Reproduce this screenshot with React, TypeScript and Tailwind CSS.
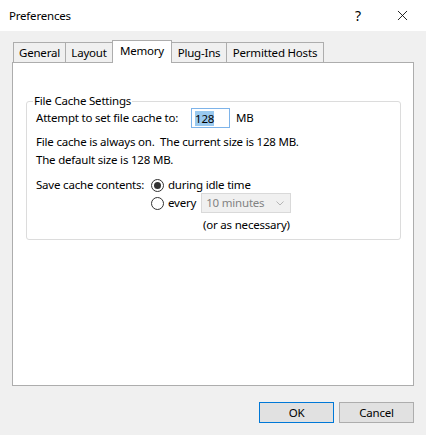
import { X } from 'lucide-react';

const font = { fontFamily: '"Noto Sans", "Open Sans", sans-serif' };

function Tab({ label, width, active = false }: { label: string; width: string; active?: boolean }) {
  if (active) {
    return (
      <div className={`relative z-10 -mb-px -ml-px flex h-[23px] justify-center border border-b-0 border-[#adadad] bg-white pt-[1px] ${width}`}>
        {label}
      </div>
    );
  }
  return (
    <div className={`-ml-px flex h-[20px] items-center justify-center border border-b-0 border-[#adadad] bg-[#f0f0f0] first:ml-0 ${width}`}>
      {label}
    </div>
  );
}

function Radio({ checked = false }: { checked?: boolean }) {
  return (
    <span className="flex h-[13px] w-[13px] items-center justify-center rounded-full border border-[#333] bg-white">
      {checked && <span className="h-[7px] w-[7px] rounded-full bg-[#333]" />}
    </span>
  );
}

export default function App() {
  return (
    <div
      className="flex h-[435px] w-[426px] flex-col bg-[#f0f0f0] text-[11.5px] tracking-[-0.2px] text-black"
      style={font}
    >
      <div className="flex h-[31px] items-center bg-white pl-[9px] pr-[15px]">
        <span className="flex-1">Preferences</span>
        <span className="mr-[33px] text-[14px]">?</span>
        <X size={17} strokeWidth={1.2} />
      </div>

      <div className="px-[12px] pt-[9px]">
        <div className="flex items-end pl-[1px]">
          <Tab label="General" width="w-[53px]" />
          <Tab label="Layout" width="w-[48px]" />
          <Tab label="Memory" width="w-[60px]" active />
          <Tab label="Plug-Ins" width="w-[56px]" />
          <Tab label="Permitted Hosts" width="w-[98px]" />
        </div>

        <div className="h-[324px] border border-[#adadad] bg-white pl-[13px] pr-[12px] pt-[30px]">
          <fieldset className="h-[147px] rounded-[3px] border border-[#dcdcdc] pl-[9px]">
            <legend className="ml-[-3px] px-[1px] leading-[16px]">File Cache Settings</legend>
            <div className="mt-[-1px] flex h-[20px] items-center">
              <span className="w-[155px]">Attempt to set file cache to:</span>
              <span className="flex h-[20px] w-[39px] items-center border border-[#7eb4ea] pl-[3px]">
                <span className="bg-[#99c9ef] leading-[15px]">128</span>
              </span>
              <span className="ml-[6px]">MB</span>
            </div>
            <div className="mt-[5px] leading-[18px]">
              File cache is always on.&nbsp; The current size is 128 MB.
            </div>
            <div className="leading-[18px]">The default size is 128 MB.</div>
            <div className="mt-[7px] flex h-[18px] items-center">
              <span className="w-[115px]">Save cache contents:</span>
              <Radio checked />
              <span className="ml-[4px]">during idle time</span>
            </div>
            <div className="mt-[-1px] flex h-[20px] items-center pl-[115px]">
              <Radio />
              <span className="ml-[4px]">every</span>
              <span className="ml-[5px] flex h-[20px] w-[90px] items-center justify-between border border-[#d9d9d9] bg-[#f0f0f0] pl-[4px] pr-[6px] text-[#838383]">
                10 minutes
                <svg width="8" height="5" viewBox="0 0 8 5" fill="none" stroke="#b5b5b5">
                  <path d="M0.5 0.5 L4 4 L7.5 0.5" />
                </svg>
              </span>
            </div>
            <div className="mt-[3px] pl-[167px] leading-[18px]">(or as necessary)</div>
          </fieldset>
        </div>
      </div>

      <div className="mt-[16px] flex justify-end gap-[5px] pr-[12px]">
        <button className="h-[21px] w-[75px] border border-[#0078d7] bg-[#e1e1e1]">OK</button>
        <button className="h-[21px] w-[75px] border border-[#adadad] bg-[#e1e1e1]">Cancel</button>
      </div>
    </div>
  );
}
